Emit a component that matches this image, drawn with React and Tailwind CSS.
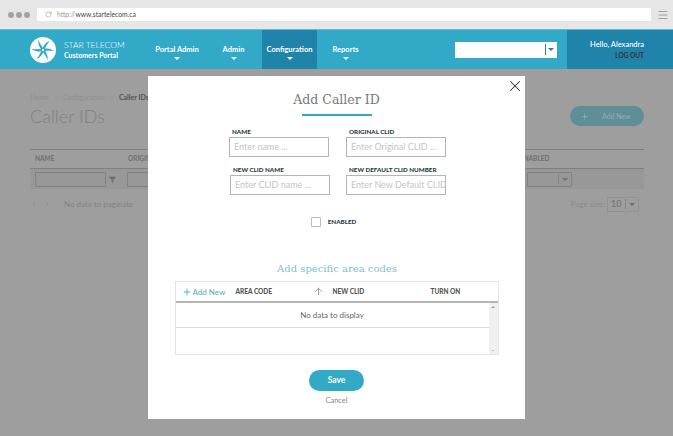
import { Menu, RotateCw, Plus, X, ArrowUp, Filter, ChevronLeft, ChevronRight } from 'lucide-react';

const navItems = [
    { label: 'Portal Admin', cls: 'w-[68px] ml-[9px]' },
    { label: 'Admin', cls: 'w-[45px]' },
    { label: 'Configuration', cls: 'w-[55px] ml-[6px] bg-[#1f83aa]' },
    { label: 'Reports', cls: 'w-[57px]' },
];

const Caret = ({ className }) => (
    <span
        className={`inline-block h-0 w-0 border-x-[3px] border-t-[3px] border-x-transparent ${className}`}
    />
);

const Logo = () => (
    <svg viewBox="0 0 26 26" className="h-[26px] w-[26px] shrink-0">
        <circle cx="13" cy="13" r="13" fill="#fff" />
        <g fill="#33a9c8">
            {[0, 60, 120, 180, 240, 300].map((deg) => (
                <path
                    key={deg}
                    d="M12.6 11.6 C13.4 8.6 15.6 5.6 19.6 3.8 C17.4 6.6 15.8 9.6 14.6 12.6 Z"
                    transform={`rotate(${deg} 13 13)`}
                />
            ))}
        </g>
    </svg>
);

const Field = ({ label, placeholder }) => (
    <div className="flex w-[100px] flex-col">
        <span className="h-[11px] pl-[3px] text-[6.25px] leading-[11px] font-black whitespace-nowrap text-[#1f3d4a]">
            {label}
        </span>
        <div className="h-[20px] overflow-hidden border border-[#b4b4b4] pl-[4px] text-[9px] leading-[18px] whitespace-nowrap text-[#c4c4c4]">
            {placeholder}
        </div>
    </div>
);

const App = () => {
    return (
        <div className="relative h-[436px] w-[673px] overflow-hidden bg-[#9e9e9e] font-['Lato',sans-serif]">
            {/* browser bar */}
            <div className="flex h-[29px] items-center bg-[#e6e6e6] pl-[8px]">
                <div className="flex gap-[2px]">
                    <span className="h-[6px] w-[6px] rounded-full bg-[#a3a3a3]" />
                    <span className="h-[6px] w-[6px] rounded-full bg-[#a3a3a3]" />
                    <span className="h-[6px] w-[6px] rounded-full bg-[#a3a3a3]" />
                </div>
                <div className="ml-[7px] flex h-[13px] w-[614px] items-center rounded-[1px] bg-white pl-[8px] text-[6.75px] text-[#999]">
                    <RotateCw className="h-[7px] w-[7px] text-[#999]" />
                    <span className="ml-[5px]">
                        http://<span className="text-[#444]">www.startelecom.ca</span>
                    </span>
                </div>
                <Menu className="ml-[6px] h-[12px] w-[12px] text-[#a0a0a0]" />
            </div>

            {/* header */}
            <div className="flex h-[40px] items-stretch border-t border-[#5fbdd6] bg-[#33a9c8] text-white">
                <div className="flex w-[134px] items-center pl-[30px]">
                    <Logo />
                    <div className="ml-[8px] flex flex-col">
                        <span className="text-[8.5px] leading-[10px] font-light whitespace-nowrap">STAR TELECOM</span>
                        <span className="text-[7px] leading-[10px] font-bold whitespace-nowrap">Customers Portal</span>
                    </div>
                </div>
                {navItems.map((item) => (
                    <div key={item.label} className={`flex flex-col items-center justify-center pt-[6px] ${item.cls}`}>
                        <span className="text-[7.5px] leading-[10px] font-bold whitespace-nowrap">{item.label}</span>
                        <Caret className="mt-[2px] border-t-white" />
                    </div>
                ))}
                <div className="ml-[81px] flex items-center">
                    <div className="flex h-[16px] w-[102px] items-center justify-end bg-white pr-[3px]">
                        <span className="mr-[2px] h-[11px] w-px bg-[#1f83aa]" />
                        <Caret className="border-t-[#1f83aa]" />
                    </div>
                </div>
                <div className="ml-[10px] flex flex-1 flex-col items-end justify-center bg-[#1f83aa] pt-[2px] pr-[29px]">
                    <span className="text-[7.5px] leading-[10px] font-medium whitespace-nowrap">Hello, Alexandra</span>
                    <span className="mt-[1px] text-[6.5px] leading-[10px] font-bold text-[#333]">LOG OUT</span>
                </div>
            </div>

            {/* dimmed page */}
            <div className="flex flex-col pr-[29px] pl-[30px] text-[#7f7f7f]">
                <div className="mt-[23px] flex text-[7px] leading-[10px] text-[#8f8f8f]">
                    <span>Home</span>
                    <span className="ml-[5px]">&gt;</span>
                    <span className="ml-[5px]">Configuration</span>
                    <span className="ml-[5px]">&gt;</span>
                    <span className="ml-[5px] font-bold text-[#555]">Caller IDs</span>
                </div>
                <div className="mt-[4px] flex h-[20px] items-center justify-between">
                    <span className="text-[18px] leading-[20px] font-light text-[#808080]">Caller IDs</span>
                    <div className="flex h-[20px] w-[74px] items-center rounded-full bg-[#5f8e98] pl-[10px] text-[7px] text-[#8fb0b8]">
                        <Plus className="h-[9px] w-[9px]" />
                        <span className="ml-[13px]">Add New</span>
                    </div>
                </div>
                <div className="mt-[23px] flex h-[20px] items-center border-y border-[#808080] pl-[5px] text-[6.5px] font-bold text-[#707070]">
                    <span className="w-[93px]">NAME</span>
                    <span>ORIGINAL CLID</span>
                    <span className="ml-[345px]">ENABLED</span>
                </div>
                <div className="flex h-[20px] items-center bg-[#989898] pl-[5px]">
                    <span className="h-[15px] w-[71px] rounded-[1px] border border-[#828282]" />
                    <Filter className="ml-[3px] h-[7px] w-[7px] fill-[#707070] text-[#707070]" />
                    <span className="ml-[11px] h-[15px] w-[40px] rounded-[1px] border border-[#828282]" />
                    <span className="ml-[360px] flex h-[15px] w-[45px] items-center justify-end rounded-[1px] border border-[#828282] pr-[3px]">
                        <span className="mr-[3px] h-[10px] w-px bg-[#858585]" />
                        <Caret className="border-t-[#707070]" />
                    </span>
                </div>
                <div className="mt-[5px] flex h-[20px] items-center text-[8px] text-[#838383]">
                    <ChevronLeft className="h-[8px] w-[8px] text-[#8a8a8a]" />
                    <ChevronRight className="ml-[5px] h-[8px] w-[8px] text-[#8a8a8a]" />
                    <span className="ml-[13px]">No data to paginate</span>
                    <span className="ml-auto text-[#8a8a8a]">Page size:</span>
                    <span className="mr-[5px] ml-[2px] flex h-[15px] w-[32px] items-center border border-[#929292] pl-[3px] text-[9px] text-[#707070]">
                        10
                        <span className="mr-[3px] ml-auto h-[10px] w-px bg-[#858585]" />
                        <Caret className="mr-[3px] border-t-[#707070]" />
                    </span>
                </div>
            </div>

            {/* modal */}
            <div className="absolute top-[76px] left-[148px] flex h-[343px] w-[377px] flex-col items-center bg-white">
                <X className="absolute top-px right-px h-[18px] w-[18px] text-[#333]" strokeWidth={1.4} />
                <h2 className="mt-[14px] font-['DejaVu_Serif',serif] text-[12.5px] leading-[20px] font-normal text-[#777]">
                    Add Caller ID
                </h2>
                <div className="mt-[4px] h-[2px] w-[70px] bg-[#33a9c8]" />

                <div className="mt-[10px] ml-[2px] flex w-[217px] justify-between">
                    <Field label="NAME" placeholder="Enter name ..." />
                    <Field label="ORIGINAL CLID" placeholder="Enter Original CLID ..." />
                </div>
                <div className="mt-[7px] ml-[3px] flex w-[216px] justify-between">
                    <Field label="NEW CLID NAME" placeholder="Enter CLID name ..." />
                    <Field label="NEW DEFAULT CLID NUMBER" placeholder="Enter New Default CLID Number" />
                </div>

                <div className="mt-[22px] mr-[6px] flex items-center">
                    <span className="h-[10px] w-[10px] rounded-[1px] border border-[#bbb]" />
                    <span className="ml-[7px] text-[6.25px] font-black text-[#1f3d4a]">ENABLED</span>
                </div>

                <h3 className="mt-[34px] ml-[1px] font-['DejaVu_Serif',serif] text-[10px] leading-[16px] font-normal text-[#7cc0d8]">
                    Add specific area codes
                </h3>

                <div className="mt-[4px] flex h-[74px] w-[324px] flex-col border border-[#e4e4e4]">
                    <div className="flex h-[21px] items-center border-b-2 border-[#b5b5b5] pl-[6px] text-[6.5px] font-black text-[#555]">
                        <Plus className="h-[10px] w-[10px] text-[#33a9c8]" strokeWidth={2} />
                        <span className="ml-[1px] w-[43px] text-[8px] font-normal text-[#4fa9c4]">Add New</span>
                        <span className="w-[77px]">AREA CODE</span>
                        <ArrowUp className="h-[11px] w-[11px] text-[#777]" strokeWidth={1.5} />
                        <span className="ml-[9px] w-[98px]">NEW CLID</span>
                        <span>TURN ON</span>
                    </div>
                    <div className="flex min-h-0 flex-1">
                        <div className="flex flex-1 flex-col">
                            <div className="flex h-[25px] items-center justify-center border-b border-[#ddd] text-[8px] text-[#666]">
                                No data to display
                            </div>
                        </div>
                        <div className="flex w-[9px] flex-col items-center justify-between bg-[#f0f0f0] py-[3px]">
                            <span className="h-0 w-0 border-x-[2px] border-b-[2px] border-x-transparent border-b-[#999]" />
                            <span className="h-0 w-0 border-x-[1px] border-t-[1px] border-x-transparent border-t-[#999]" />
                        </div>
                    </div>
                </div>

                <button className="mt-[15px] h-[21px] w-[55px] rounded-full bg-[#33a9c8] text-[8.5px] font-bold text-white">
                    Save
                </button>
                <span className="mt-[5px] text-[7.5px] leading-[10px] text-[#888]">Cancel</span>
            </div>
        </div>
    );
};

export default App;
